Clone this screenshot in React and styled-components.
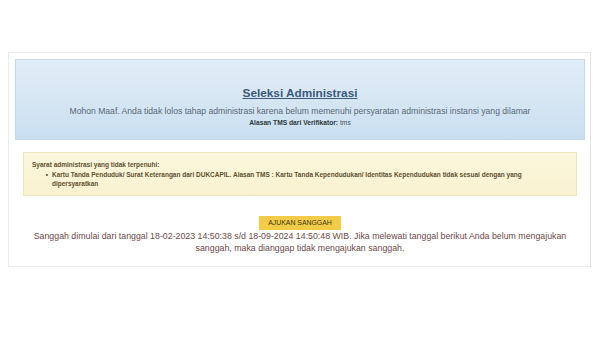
import React from "react";
import styled, { createGlobalStyle } from "styled-components";

const Global = createGlobalStyle`
  html, body { margin: 0; padding: 0; background: #ffffff; }
  body { font-family: "Liberation Sans", Arial, sans-serif; }
`;

const Page = styled.div`
  padding: 52px 0 0 8px;
  width: 583px;
`;

const Panel = styled.div`
  border: 1px solid #ececec;
  border-right-color: #e2e2e2;
  padding: 6px 5px 12px 6px;
`;

const InfoBox = styled.div`
  height: 81px;
  box-sizing: border-box;
  padding-top: 26px;
  border: 1px solid #c3d8ea;
  background: linear-gradient(to bottom, #e1edf7 0%, #d6e6f3 50%, #c9dff0 100%);
  display: flex;
  flex-direction: column;
  align-items: center;
  text-align: center;
`;

const Title = styled.a`
  font-size: 11.8px;
  line-height: 14px;
  font-weight: bold;
  color: #3b5a7b;
  text-decoration: underline;
`;

const Desc = styled.div`
  margin-top: 5px;
  font-size: 8.6px;
  line-height: 12px;
  color: #5b6878;
`;

const Reason = styled.div`
  margin-top: 1px;
  font-size: 6.7px;
  line-height: 10px;
  color: #4a5560;
  b { color: #2e3740; }
`;

const WarnBox = styled.div`
  margin: 12px 8px 0 8px;
  padding: 7px 8px 6px 8px;
  border: 1px solid #f0e6bd;
  background: linear-gradient(to bottom, #fcf7de 0%, #f9f1cf 100%);
  font-size: 6.5px;
  line-height: 9.5px;
  font-weight: bold;
  color: #5e5130;
`;

const Item = styled.div`
  display: grid;
  grid-template-columns: 20px 1fr;
`;

const Bullet = styled.span`
  text-align: right;
  padding-right: 4px;
`;

const Actions = styled.div`
  margin-top: 20px;
  display: flex;
  flex-direction: column;
  align-items: center;
  text-align: center;
`;

const Button = styled.button`
  height: 14px;
  padding: 0 9px;
  border: none;
  background: #f2cc46;
  color: #3f3518;
  font-family: "Liberation Sans", Arial, sans-serif;
  font-size: 6.9px;
  line-height: 14px;
  cursor: pointer;
`;

const Notice = styled.div`
  margin-top: 0;
  font-size: 8.8px;
  line-height: 12px;
  color: #6e4a4a;
`;

export default function App() {
  return (
    <>
      <Global />
      <Page>
        <Panel>
          <InfoBox>
            <Title>Seleksi Administrasi</Title>
            <Desc>
              Mohon Maaf. Anda tidak lolos tahap administrasi karena belum memenuhi persyaratan administrasi instansi yang dilamar
            </Desc>
            <Reason>
              <b>Alasan TMS dari Verifikator:</b> tms
            </Reason>
          </InfoBox>
          <WarnBox>
            <div>Syarat administrasi yang tidak terpenuhi:</div>
            <Item>
              <Bullet>•</Bullet>
              <span>
                Kartu Tanda Penduduk/ Surat Keterangan dari DUKCAPIL. Alasan TMS : Kartu Tanda Kependudukan/ Identitas Kependudukan tidak sesuai dengan yang
                <br />
                dipersyaratkan
              </span>
            </Item>
          </WarnBox>
          <Actions>
            <Button>AJUKAN SANGGAH</Button>
            <Notice>
              Sanggah dimulai dari tanggal 18-02-2023 14:50:38 s/d 18-09-2024 14:50:48 WIB. Jika melewati tanggal berikut Anda belum mengajukan
              <br />
              sanggah, maka dianggap tidak mengajukan sanggah.
            </Notice>
          </Actions>
        </Panel>
      </Page>
    </>
  );
}
